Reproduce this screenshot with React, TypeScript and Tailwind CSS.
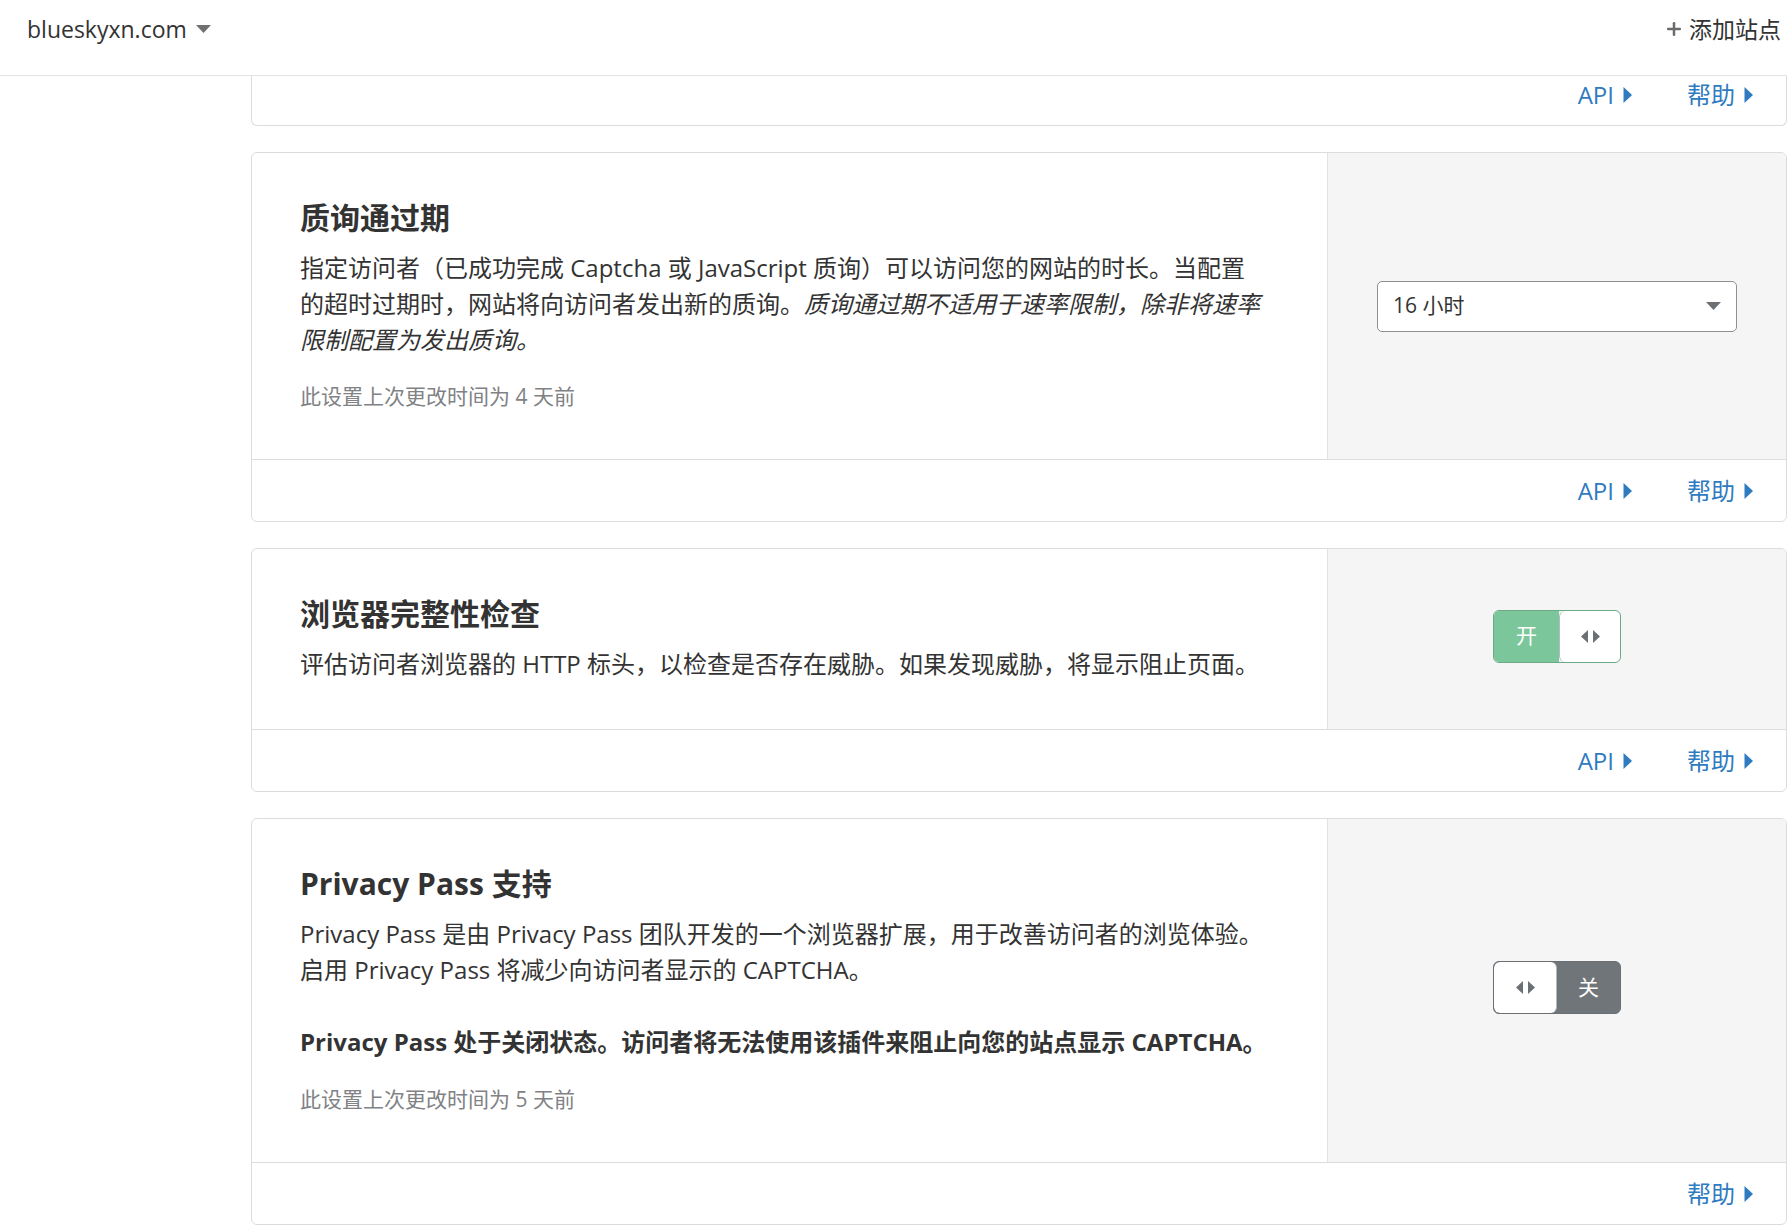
import { Plus } from 'lucide-react';

const font = { fontFamily: '"Open Sans", "Noto Sans CJK SC", sans-serif' };

function CaretRight() {
  return (
    <svg width="9" height="16" viewBox="0 0 9 16" className="ml-[9px] shrink-0">
      <path d="M0.5 0 L9 8 L0.5 16 Z" fill="currentColor" />
    </svg>
  );
}

function CaretDown({ className = '' }: { className?: string }) {
  return (
    <svg width="15" height="8" viewBox="0 0 15 8" className={className}>
      <path d="M0 0 L15 0 L7.5 8 Z" fill="currentColor" />
    </svg>
  );
}

function Arrows() {
  return (
    <svg width="19" height="13" viewBox="0 0 19 13">
      <path d="M7 0 L0 6.5 L7 13 Z" fill="#6b7075" />
      <path d="M12 0 L19 6.5 L12 13 Z" fill="#6b7075" />
    </svg>
  );
}

function CardFooter({ api = true }: { api?: boolean }) {
  return (
    <div className="h-[61px] shrink-0 flex items-center justify-end gap-[55px] pr-[33px] text-[24px] text-[#2f7bbf]">
      {api && (
        <a className="flex items-center cursor-pointer">
          API
          <CaretRight />
        </a>
      )}
      <a className="flex items-center cursor-pointer">
        帮助
        <CaretRight />
      </a>
    </div>
  );
}

function Toggle({ on }: { on: boolean }) {
  if (on) {
    return (
      <div className="flex w-[128px] h-[53px] mb-[6px] rounded-[6px] overflow-hidden border border-[#6aaa84]">
        <div className="w-[65px] bg-[#7bc69a] flex items-center justify-center text-white text-[21px]">开</div>
        <div className="flex-1 bg-white flex items-center justify-center rounded-[6px] border-l border-[#b5b9bc]">
          <Arrows />
        </div>
      </div>
    );
  }
  return (
    <div className="flex w-[128px] h-[53px] mb-[6px] rounded-[6px] overflow-hidden border border-[#6b7075] bg-[#70757a]">
      <div className="w-[63px] bg-white flex items-center justify-center rounded-[6px] border-r border-[#b5b9bc]">
        <Arrows />
      </div>
      <div className="flex-1 flex items-center justify-center text-white text-[21px]">关</div>
    </div>
  );
}

function SettingCard({
  title,
  children,
  control,
  api = true,
}: {
  title: string;
  children: React.ReactNode;
  control: React.ReactNode;
  api?: boolean;
}) {
  return (
    <div className="ml-[251px] mt-[26px] border border-[#dcdcdc] rounded-[6px] overflow-hidden bg-white">
      <div className="flex border-b border-[#dcdcdc]">
        <div className="flex-1 px-[48px] py-[47px]">
          <h3 className="text-[30px] leading-[36px] font-bold text-[#333] mb-[14px]">{title}</h3>
          {children}
        </div>
        <div className="w-[459px] bg-[#f5f5f5] border-l border-[#e2e2e2] flex items-center justify-center">
          {control}
        </div>
      </div>
      <CardFooter api={api} />
    </div>
  );
}

export default function App() {
  return (
    <div className="h-screen overflow-hidden bg-white text-[#333]" style={font}>
      <header className="h-[76px] border-b border-[#e3e3e3] flex items-start justify-between pt-[12px] pl-[27px] pr-[6px]">
        <div className="flex items-center text-[23px] text-[#333]">
          blueskyxn.com
          <CaretDown className="ml-[9px] text-[#707070]" />
        </div>
        <div className="flex items-center text-[23px] text-[#333]">
          <Plus className="w-[20px] h-[20px] text-[#6b6b6b] mr-[5px]" strokeWidth={3} />
          添加站点
        </div>
      </header>

      <div className="ml-[251px] h-[50px] border-x border-b border-[#dcdcdc] rounded-b-[6px] flex flex-col justify-end overflow-hidden">
        <CardFooter />
      </div>

      <SettingCard
        title="质询通过期"
        control={
          <div className="w-[360px] h-[51px] bg-white border border-[#8c9196] rounded-[5px] flex items-center justify-between pl-[15px] pr-[15px] text-[21px] text-[#333]">
            <span>16 小时</span>
            <CaretDown className="text-[#6b7075]" />
          </div>
        }
      >
        <p className="text-[24px] leading-[36px]">
          指定访问者（已成功完成 Captcha 或 JavaScript 质询）可以访问您的网站的时长。当配置
          <br />
          的超时过期时，网站将向访问者发出新的质询。
          <em>质询通过期不适用于速率限制，除非将速率限制配置为发出质询。</em>
        </p>
        <p className="mt-[22px] text-[21px] leading-[32px] text-[#808285]">此设置上次更改时间为 4 天前</p>
      </SettingCard>

      <SettingCard title="浏览器完整性检查" control={<Toggle on />}>
        <p className="text-[24px] leading-[36px]">
          评估访问者浏览器的 HTTP 标头，以检查是否存在威胁。如果发现威胁，将显示阻止页面。
        </p>
      </SettingCard>

      <SettingCard title="Privacy Pass 支持" control={<Toggle on={false} />} api={false}>
        <p className="text-[24px] leading-[36px]">
          Privacy Pass 是由 Privacy Pass 团队开发的一个浏览器扩展，用于改善访问者的浏览体验。启用 Privacy Pass 将减少向访问者显示的 CAPTCHA。
        </p>
        <p className="mt-[36px] text-[24px] leading-[36px] font-bold">
          Privacy Pass 处于关闭状态。访问者将无法使用该插件来阻止向您的站点显示 CAPTCHA。
        </p>
        <p className="mt-[23px] text-[21px] leading-[32px] text-[#808285]">此设置上次更改时间为 5 天前</p>
      </SettingCard>
    </div>
  );
}
